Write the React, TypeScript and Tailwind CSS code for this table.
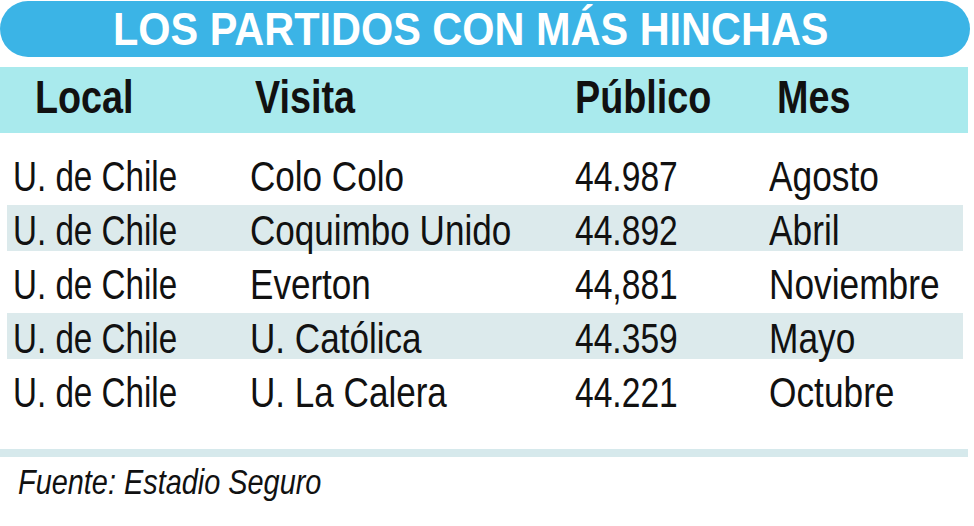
const rows = [
  { local: "U. de Chile", visita: "Colo Colo", publico: "44.987", mes: "Agosto" },
  { local: "U. de Chile", visita: "Coquimbo Unido", publico: "44.892", mes: "Abril" },
  { local: "U. de Chile", visita: "Everton", publico: "44,881", mes: "Noviembre" },
  { local: "U. de Chile", visita: "U. Católica", publico: "44.359", mes: "Mayo" },
  { local: "U. de Chile", visita: "U. La Calera", publico: "44.221", mes: "Octubre" },
]

// no condensed face installed, so the narrow look comes from scale-x
const cell = "block whitespace-nowrap origin-left"
const head = "block whitespace-nowrap origin-left scale-x-[0.82]"

export default function App() {
  return (
    <main className="w-[974px] h-[526px] bg-white text-[#111] overflow-hidden font-['Liberation_Sans',Arial,sans-serif]">
      <div className="mt-[1px] h-[56px] w-[970px] rounded-full bg-[#3bb4e6] pl-[113px]">
        <h1 className="text-white font-bold text-[47px] leading-[56px] whitespace-nowrap origin-left scale-x-[0.882]">
          LOS PARTIDOS CON MÁS HINCHAS
        </h1>
      </div>

      <div className="mt-[10px] h-[66px] w-[968px] bg-[#a9eaed] grid grid-cols-[220px_320px_202px_1fr] items-start pl-[35px] font-bold text-[46px] leading-[60px]">
        <span className={head}>Local</span>
        <span className={head}>Visita</span>
        <span className={head}>Público</span>
        <span className={head}>Mes</span>
      </div>

      <ul className="mt-[18px] flex flex-col gap-[8px]">
        {rows.map((r, i) => (
          <li
            key={i}
            className={`h-[46px] ml-[7px] w-[956px] pl-[6px] grid grid-cols-[237px_325px_194px_1fr] items-start text-[42px] leading-[51px] ${i % 2 === 1 ? "bg-[#dceaec]" : ""}`}
          >
            <span className={`${cell} scale-x-[0.79]`}>{r.local}</span>
            <span className={`${cell} scale-x-[0.835]`}>{r.visita}</span>
            <span className={`${cell} scale-x-[0.8]`}>{r.publico}</span>
            <span className={`${cell} scale-x-[0.84]`}>{r.mes}</span>
          </li>
        ))}
      </ul>

      <div className="mt-[36px] h-[8px] w-[968px] bg-[#d6e9ec]" />
      <div className="mt-[5px] pl-[18px]">
        <p className="italic text-[35px] leading-[40px] whitespace-nowrap origin-left scale-x-[0.825]">
          Fuente: Estadio Seguro
        </p>
      </div>
    </main>
  )
}
